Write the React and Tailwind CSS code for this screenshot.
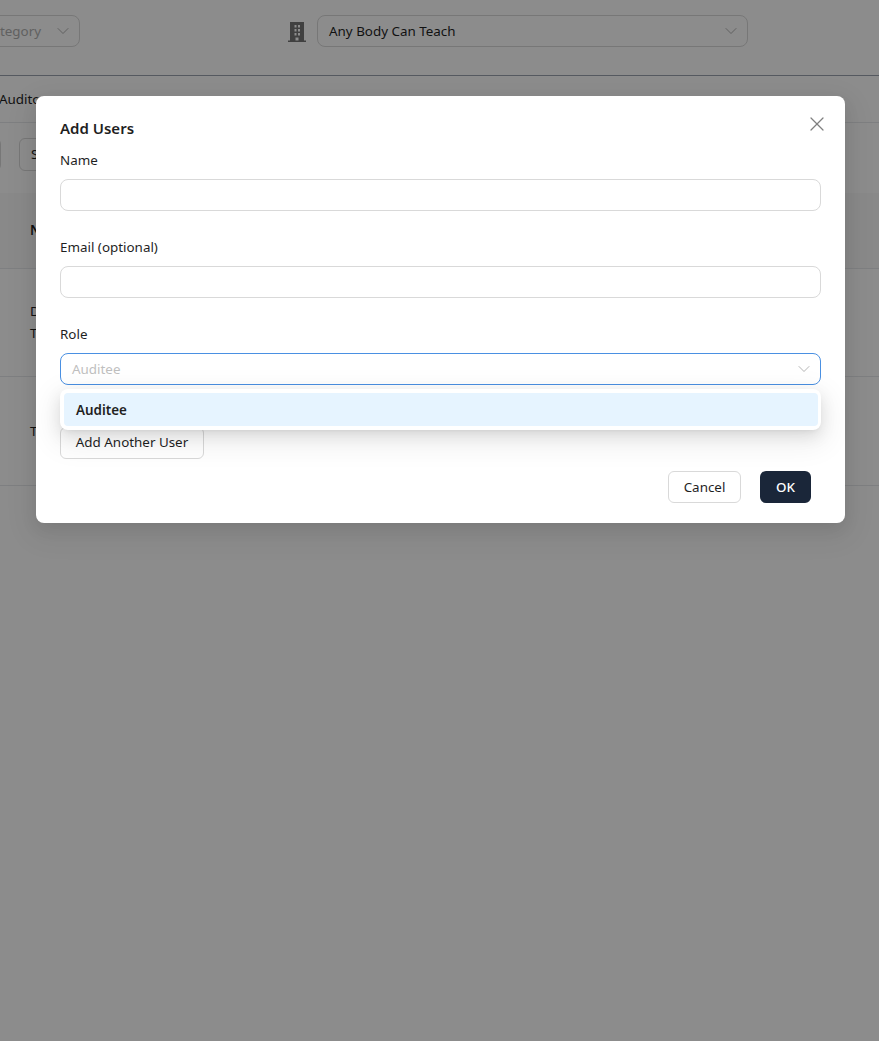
import React from 'react';
import { X, ChevronDown } from 'lucide-react';

const FONT = "font-['Noto_Sans','Open_Sans',sans-serif]";

const BuildingIcon = () => (
  <svg width="18" height="20" viewBox="0 0 18 20" className="text-[#757575]">
    <path fill="currentColor" fillRule="evenodd" d="M2 0h14v18.500h2V20H0v-1.500h2V0zm4.500 3v2.500h2V3h-2zm3.500 0v2.500h2V3h-2zM6.500 7v2.500h2V7h-2zM10 7v2.500h2V7h-2zM6.500 11v2.500h2V11h-2zm3.500 0v2.500h2V11h-2zM7.500 15.500v3h3v-3h-3z" />
  </svg>
);

// page sitting behind the dialog, mostly covered by it
const BackgroundPage = () => (
  <div className="w-[879px] h-[1041px] overflow-hidden bg-white text-[13.4px] text-[#1f1f1f]">
    <div className="h-[76px] border-b border-[#9ca3af] flex items-start pt-[15px] -ml-[100px]">
      <div className="w-[180px] h-[32px] border border-[#d9d9d9] rounded-lg flex items-center justify-end gap-[12px] pr-[6px] text-[#b0b0b0]">
        <span>Category</span>
        <ChevronDown size={20} strokeWidth={1} className="text-[#a0a0a0]" />
      </div>
      <div className="ml-[208px] mt-[7px]"><BuildingIcon /></div>
      <div className="ml-[11px] w-[431px] h-[32px] border border-[#d9d9d9] rounded-lg flex items-center justify-between pl-[11px] pr-[6px]">
        <span>Any Body Can Teach</span>
        <ChevronDown size={20} strokeWidth={1} className="text-[#a0a0a0]" />
      </div>
    </div>
    <div className="h-[47px] border-b border-[#e5e7eb] flex items-center">
      <span className="-ml-[1px]">Auditors</span>
    </div>
    <div className="h-[70px] flex items-center gap-[18px] -ml-[60px] pb-[7px]">
      <div className="w-[61px] h-[33px] border border-[#d9d9d9] rounded-md" />
      <div className="w-[120px] h-[33px] border border-[#d9d9d9] rounded-md flex items-center pl-[11px]">Search</div>
    </div>
    <div className="h-[76px] bg-[#fafafa] border-b border-[#e5e7eb] flex items-center pl-[30px] font-semibold">Name</div>
    <div className="h-[108px] border-b border-[#e5e7eb] flex flex-col justify-center pl-[30px] leading-[22px] pb-[2px]">
      <span>Demo</span>
      <span>Test</span>
    </div>
    <div className="h-[109px] border-b border-[#e5e7eb] flex items-center pl-[30px]">Test</div>
  </div>
);

const Field = ({ label }) => (
  <div className="mb-[25px]">
    <label className="block leading-[22px] mb-[8px]">{label}</label>
    <input className="block w-full h-[32px] border border-[#d9d9d9] rounded-lg bg-white outline-none" />
  </div>
);

export default function App() {
  return (
    <div className={`relative w-[879px] h-[1041px] overflow-hidden ${FONT}`}>
      <BackgroundPage />

      <div className="absolute inset-0 bg-black/45 pt-[96px] pl-[36px]">
        <div className="relative w-[809px] h-[427px] bg-white rounded-lg pt-[20px] px-[24px] text-[13.4px] text-[#1f1f1f] shadow-[0_6px_16px_rgba(0,0,0,0.08),0_9px_28px_8px_rgba(0,0,0,0.05)]">
          <button className="absolute top-[16px] right-[16px] text-[#808080]">
            <X size={24} strokeWidth={1.25} />
          </button>
          <h2 className="text-[15px] font-semibold leading-[24px] mb-[9px]">Add Users</h2>
          <Field label="Name" />
          <Field label="Email (optional)" />
          <label className="block leading-[22px] mb-[8px]">Role</label>
          <div className="relative">
            <div className="w-full h-[32px] border-[1.5px] border-[#4a90e2] rounded-lg flex items-center justify-between pl-[11px] pr-[6px] text-[#bfbfbf]">
              <span>Auditee</span>
              <ChevronDown size={20} strokeWidth={1} className="text-[#a6a6a6]" />
            </div>
            <div className="absolute z-10 top-[36px] left-0 right-0 h-[41px] bg-white rounded-lg pt-[4px] pl-[4px] pr-[3px] shadow-[0_6px_16px_rgba(0,0,0,0.1),0_3px_6px_-4px_rgba(0,0,0,0.12),0_9px_28px_8px_rgba(0,0,0,0.06)]">
              <div className="h-[33px] bg-[#e6f4ff] rounded flex items-center pl-[12px] pt-[1px] font-semibold">Auditee</div>
            </div>
          </div>
          <button className="block mt-[42px] w-[144px] h-[32px] border border-[#d9d9d9] rounded-md bg-white pb-[1px]">Add Another User</button>
          <div className="flex justify-end gap-[19px] mt-[12px] pr-[10px]">
            <button className="w-[73px] h-[32px] border border-[#d9d9d9] rounded-md bg-white">Cancel</button>
            <button className="w-[51px] h-[32px] rounded-md bg-[#1a2639] text-white font-medium">OK</button>
          </div>
        </div>
      </div>
    </div>
  );
}
